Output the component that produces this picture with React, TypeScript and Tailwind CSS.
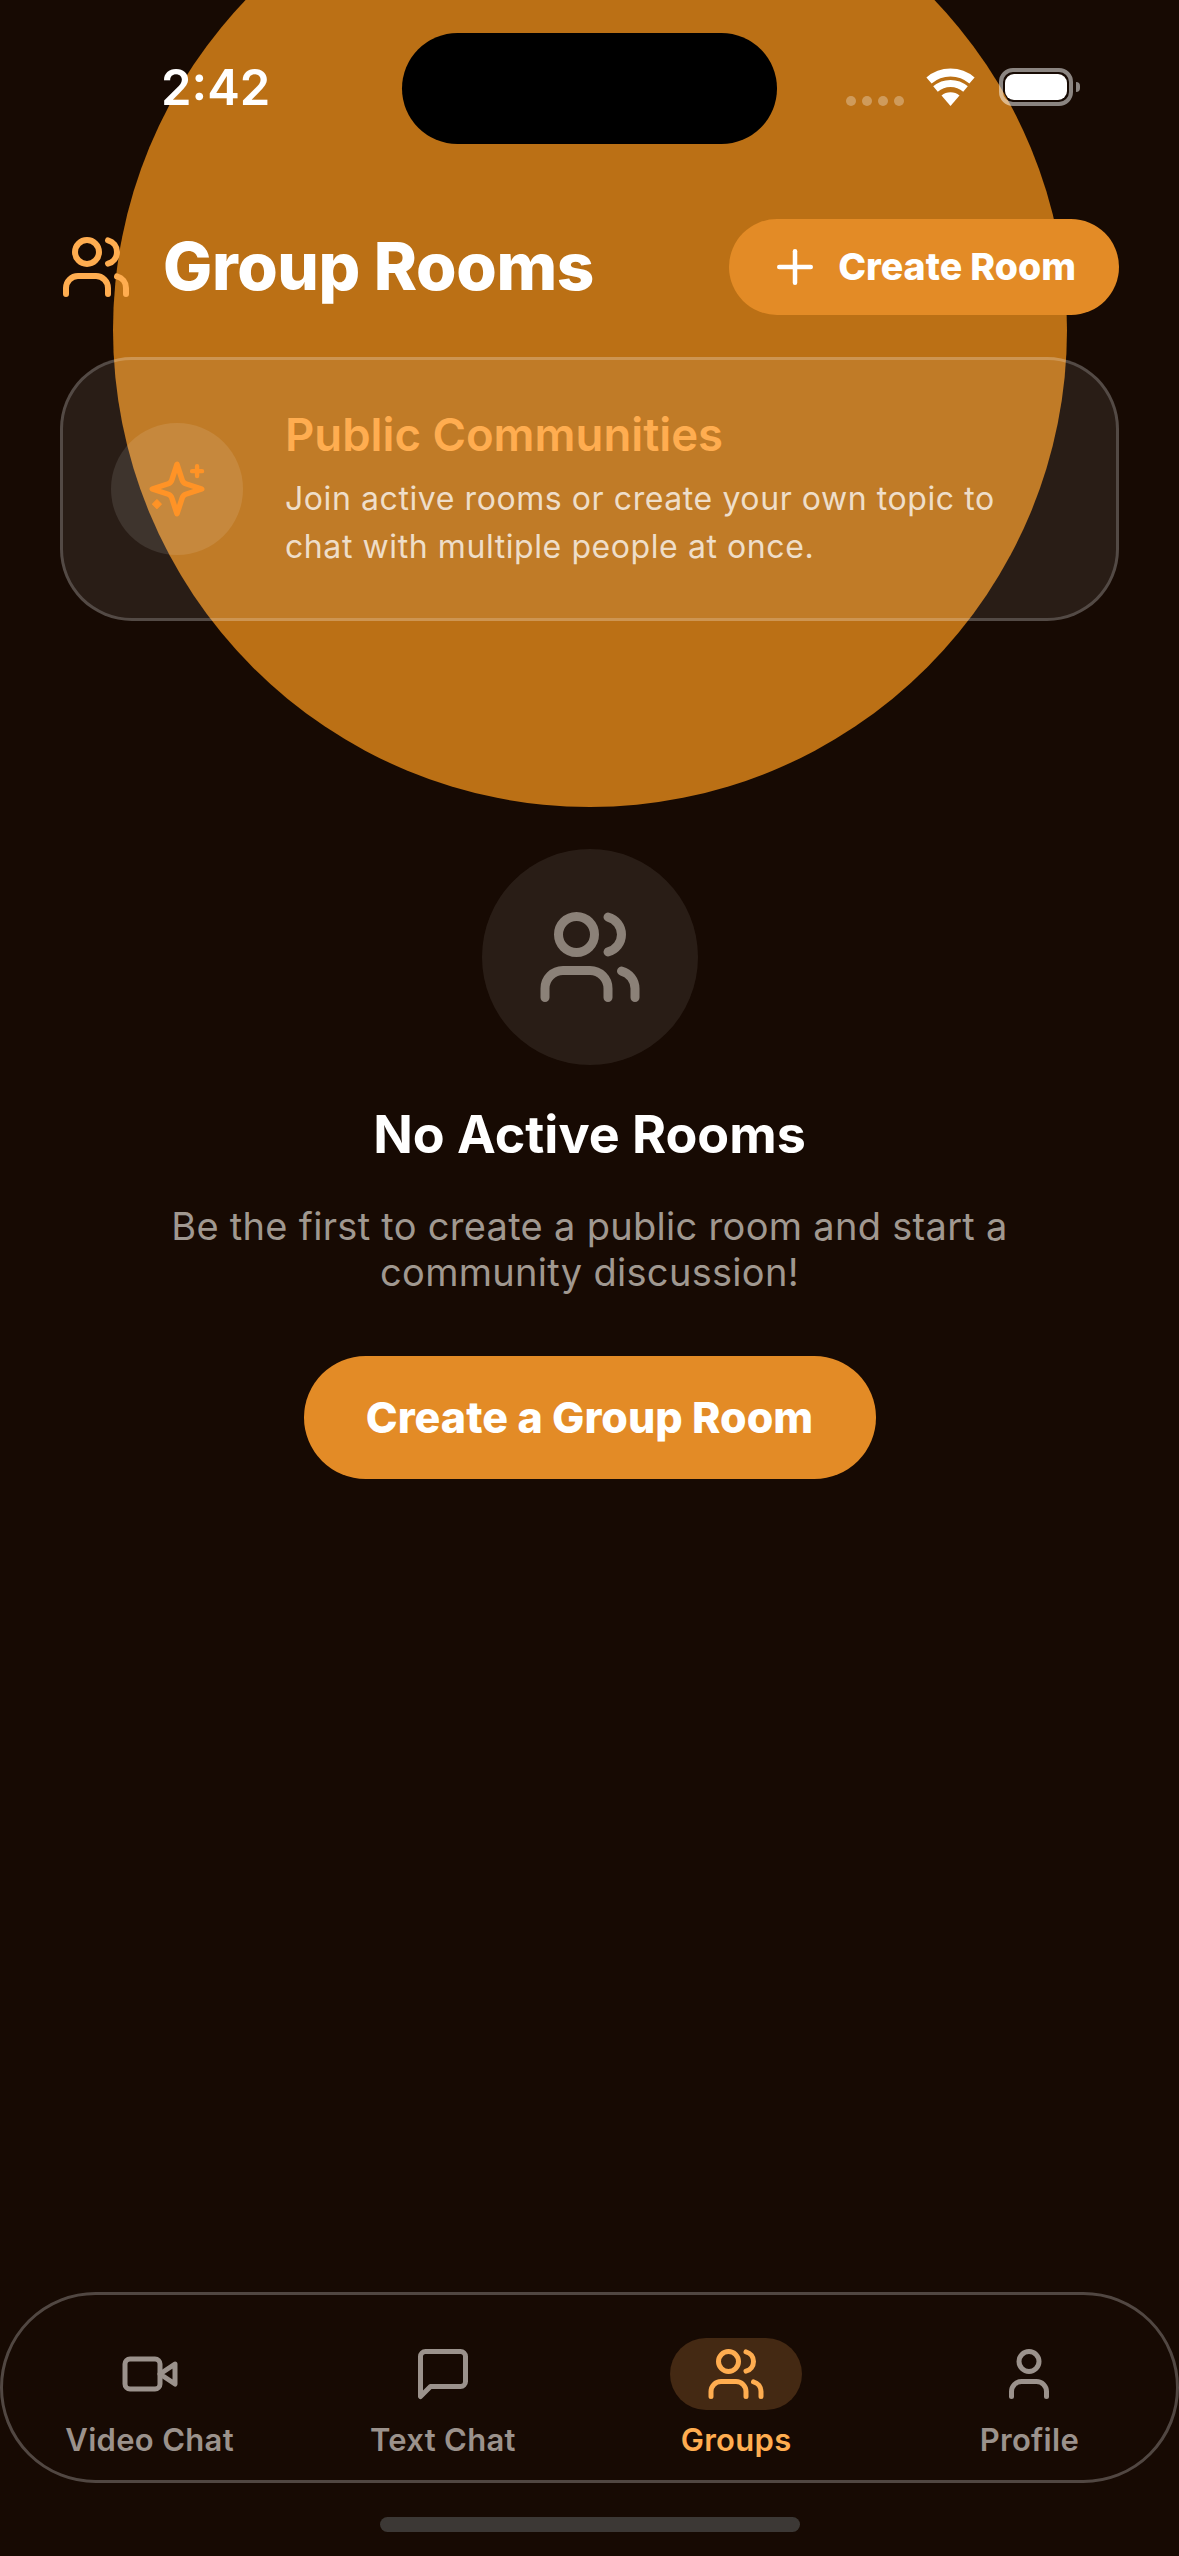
import { Plus, Users, User } from "lucide-react";

function Wifi() {
  return (
    <svg width="49" height="38" viewBox="0 0 49 38" className="block">
      <path d="M24.5 38 L15.5 27.5 A14 14 0 0 1 33.5 27.5 Z" fill="#fff" />
      <path d="M9.5 21 A23 23 0 0 1 39.5 21" fill="none" stroke="#fff" strokeWidth="7" />
      <path d="M3 12.5 A33 33 0 0 1 46 12.5" fill="none" stroke="#fff" strokeWidth="8" />
    </svg>
  );
}

function Stroked({ size, children }: { size: number; children: React.ReactNode }) {
  return (
    <svg width={size} height={size} viewBox="0 0 24 24" fill="none" stroke="currentColor" strokeWidth="2" strokeLinecap="round" strokeLinejoin="round">
      {children}
    </svg>
  );
}

function NavItem({ label, icon, active }: { label: string; icon: React.ReactNode; active?: boolean }) {
  return (
    <div className="flex flex-1 flex-col items-center">
      <div className={`flex h-[72px] w-[132px] items-center justify-center rounded-full ${active ? "bg-[#442913] text-[#ffad50]" : "text-[#9b928c]"}`}>
        {icon}
      </div>
      <span className={`mt-[10px] text-[31px] leading-[40px] font-semibold tracking-[0.3px] ${active ? "text-[#ffad50]" : "text-[#9b928c]"}`}>
        {label}
      </span>
    </div>
  );
}

export default function App() {
  return (
    <div className="relative flex h-[2556px] w-[1179px] flex-col overflow-hidden bg-[#170a03] font-['Inter',sans-serif] text-white">
      <div className="absolute top-[-147px] left-[113px] h-[954px] w-[954px] rounded-full bg-[#bb7015]" />

      <div className="relative flex h-[144px] shrink-0 items-start pt-[33px]">
        <span className="mt-[25px] ml-[161px] w-[241px] text-[49px] leading-[60px] font-semibold">2:42</span>
        <div className="h-[111px] w-[375px] rounded-[56px] bg-black" />
        <div className="mt-[35px] ml-[69px] flex items-end">
          <div className="flex gap-[6px]">
            {[0, 1, 2, 3].map((i) => (
              <span key={i} className="h-[10px] w-[10px] rounded-full bg-white/30" />
            ))}
          </div>
          <div className="ml-[22px]"><Wifi /></div>
          <div className="ml-[24px] flex items-center">
            <div className="h-[38px] w-[74px] rounded-[14px] border-[4px] border-white/50 p-[2px]">
              <div className="h-full w-full rounded-[9px] bg-white" />
            </div>
            <div className="ml-[3px] h-[10px] w-[4px] rounded-r-full bg-white/50" />
          </div>
        </div>
      </div>

      <div className="relative mt-[75px] flex h-[96px] shrink-0 items-center px-[60px]">
        <Users size={72} strokeWidth={2} className="shrink-0 text-[#ffad50]" />
        <h1 className="ml-[31px] text-[65.5px] leading-[76px] font-extrabold tracking-[-0.4px]">Group Rooms</h1>
        <button className="ml-auto flex h-[96px] items-center rounded-full bg-[#e38b26] pr-[43px] pl-[39px]">
          <Plus size={54} strokeWidth={2} className="text-white" />
          <span className="ml-[16px] text-[37.5px] leading-[48px] font-extrabold">Create Room</span>
        </button>
      </div>

      <div className="relative mx-[60px] mt-[42px] flex h-[264px] shrink-0 items-center rounded-[72px] border-[3px] border-white/20 bg-white/[0.08] px-[48px]">
        <div className="flex h-[132px] w-[132px] shrink-0 items-center justify-center rounded-full bg-white/[0.1]">
          <Stroked size={66}>
            <path d="m12 3-1.912 5.813a2 2 0 0 1-1.275 1.275L3 12l5.813 1.912a2 2 0 0 1 1.275 1.275L12 21l1.912-5.813a2 2 0 0 1 1.275-1.275L21 12l-5.813-1.912a2 2 0 0 1-1.275-1.275L12 3Z" stroke="#ff9326" />
            <path d="M19.3 3.7v3.6M17.5 5.5h3.6" stroke="#ff9326" strokeWidth="1.6" />
            <path d="M4.7 15.9 6.3 17.5 4.7 19.1 3.1 17.5Z" fill="#ff9326" stroke="#ff9326" strokeWidth="0.4" />
          </Stroked>
        </div>
        <div className="ml-[42px] min-w-0">
          <div className="text-[45.5px] leading-[54px] font-semibold text-[#ffad50]">Public Communities</div>
          <p className="mt-[13px] text-[32px] leading-[48px] tracking-[0.58px] text-white/75">
            Join active rooms or create your own topic to
            <br />
            chat with multiple people at once.
          </p>
        </div>
      </div>

      <div className="relative flex flex-col items-center">
        <div className="mt-[228px] flex h-[216px] w-[216px] items-center justify-center rounded-full bg-white/[0.08]">
          <Users size={108} strokeWidth={2} className="text-[#8b8178]" />
        </div>
        <h2 className="mt-[40px] text-[52px] leading-[60px] font-bold">No Active Rooms</h2>
        <p className="mt-[38px] text-center text-[38px] leading-[46px] tracking-[0.3px] text-[#a09890]">
          Be the first to create a public room and start a
          <br />
          community discussion!
        </p>
        <button className="mt-[61px] flex h-[123px] w-[572px] items-center justify-center rounded-full bg-[#e38b26] text-[43px] font-extrabold">
          Create a Group Room
        </button>
      </div>

      <div className="relative mt-auto flex h-[191px] shrink-0 items-start rounded-[96px] border-[3px] border-white/25 pt-[43px]">
        <NavItem
          label="Video Chat"
          icon={
            <Stroked size={60}>
              <path d="m22 8-6 4 6 4V8Z" />
              <rect x="2" y="6" width="14" height="12" rx="2" />
            </Stroked>
          }
        />
        <NavItem
          label="Text Chat"
          icon={
            <Stroked size={60}>
              <path d="M21 15a2 2 0 0 1-2 2H7l-4 4V5a2 2 0 0 1 2-2h14a2 2 0 0 1 2 2z" />
            </Stroked>
          }
        />
        <NavItem label="Groups" active icon={<Users size={60} strokeWidth={2} />} />
        <NavItem label="Profile" icon={<User size={60} strokeWidth={2} />} />
      </div>
      <div className="relative flex h-[73px] shrink-0 justify-center pt-[34px]">
        <div className="h-[15px] w-[420px] rounded-full bg-[#3c3835]" />
      </div>
    </div>
  );
}
